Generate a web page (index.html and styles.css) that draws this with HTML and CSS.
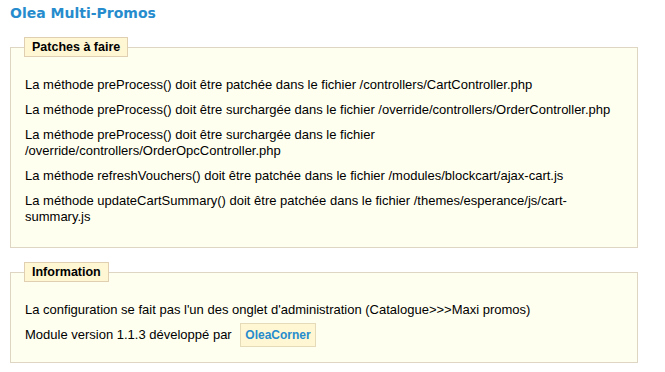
FILE: index.html
```html
<!DOCTYPE html>
<html lang="fr">
<head>
    <meta charset="UTF-8">
    <title>Olea Multi-Promos</title>
    <link rel="stylesheet" href="styles.css">
</head>
<body>

<h2 class="module-title">Olea Multi-Promos</h2>

<fieldset class="panel patches">
    <legend>Patches à faire</legend>
    <p>La méthode preProcess() doit être patchée dans le fichier /controllers/CartController.php</p>
    <p>La méthode preProcess() doit être surchargée dans le fichier /override/controllers/OrderController.php</p>
    <p>La méthode preProcess() doit être surchargée dans le fichier /override/controllers/OrderOpcController.php</p>
    <p>La méthode refreshVouchers() doit être patchée dans le fichier /modules/blockcart/ajax-cart.js</p>
    <p>La méthode updateCartSummary() doit être patchée dans le fichier /themes/esperance/js/cart-summary.js</p>
</fieldset>

<fieldset class="panel">
    <legend>Information</legend>
    <p>La configuration se fait pas l'un des onglet d'administration (Catalogue&gt;&gt;&gt;Maxi promos)</p>
    <p>Module version 1.1.3 développé par <a class="author" href="#">OleaCorner</a></p>
</fieldset>

</body>
</html>
```

FILE: styles.css
```css
body {
    font-family: "Liberation Sans", Arial, sans-serif;
    font-size: 13px;
    color: #000;
    background-color: #fff;
    margin: 0;
    padding: 3px 27px 0 10px;
}
.module-title {
    font-family: "DejaVu Sans", Verdana, sans-serif;
    color: #268ccd;
    font-size: 14px;
    font-weight: bold;
    line-height: 20px;
    margin: 0 0 14px 0;
}
.panel {
    background-color: #fffff0;
    border: 1px solid #dfd5c3;
    margin: 0 0 14px 0;
    padding: 11px 14px 10px 14px;
}
.patches {
    padding-bottom: 13px;
}
.panel legend {
    background-color: #fff6d3;
    border: 1px solid #e0d0b1;
    font-weight: bold;
    font-size: 12.5px;
    line-height: 14px;
    padding: 2px 7px;
    margin-left: -1px;
}
.panel p {
    margin: 9px 0;
    line-height: 16px;
}
.author {
    background-color: #fff6d3;
    border: 1px solid #e6dbb9;
    color: #268ccd;
    font-size: 12px;
    font-weight: bold;
    text-decoration: none;
    padding: 4px 4px;
    margin-left: 5px;
}
```
